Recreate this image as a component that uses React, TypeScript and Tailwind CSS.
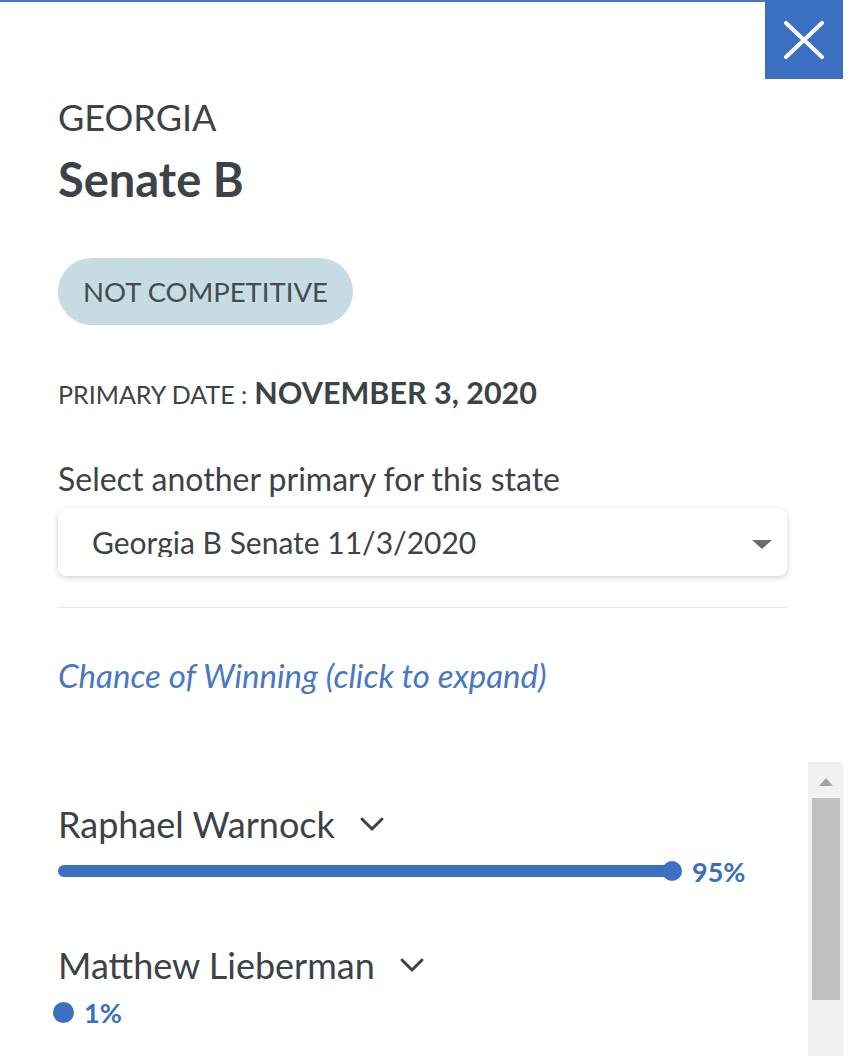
import { useState } from "react";

type Candidate = { name: string; chance: number };

const CANDIDATES: Candidate[] = [
  { name: "Raphael Warnock", chance: 95 },
  { name: "Matthew Lieberman", chance: 1 },
];

const FONT = { fontFamily: "Lato, 'Noto Sans', sans-serif" };

function Chevron() {
  return (
    <svg width="26" height="16" viewBox="0 0 26 16" className="shrink-0">
      <polyline
        points="3,3 13,13 23,3"
        fill="none"
        stroke="#3d4246"
        strokeWidth="3"
        strokeLinecap="round"
        strokeLinejoin="round"
      />
    </svg>
  );
}

function CandidateRow({ c }: { c: Candidate }) {
  // full track would be 655px; the knob sits on the bar's right end
  const width = Math.round((c.chance / 100) * 655);
  return (
    <div className="flex flex-col">
      <button className="flex items-center gap-[24px] text-left text-[36px] leading-none text-[#3d4246]">
        <span>{c.name}</span>
        <Chevron />
      </button>
      <div className="mt-[16px] flex items-center gap-[10px]">
        {c.chance > 5 ? (
          <div className="relative mr-[2px] h-[12px]" style={{ width }}>
            <div className="h-full rounded-full bg-[#3a6fc1]" />
            <span className="absolute right-[-2px] top-1/2 h-[20px] w-[20px] -translate-y-1/2 rounded-full bg-[#3a6fc1]" />
          </div>
        ) : (
          <span className="ml-[-5px] h-[21px] w-[21px] rounded-full bg-[#3a6fc1]" />
        )}
        <span className="text-[27px] font-bold leading-none text-[#3a6fc1]">
          {c.chance}%
        </span>
      </div>
    </div>
  );
}

export default function App() {
  const [primary, setPrimary] = useState("Georgia B Senate 11/3/2020");

  return (
    <div className="relative h-[1056px] w-[854px] overflow-hidden bg-white" style={FONT}>
      <div className="h-[2px] w-[765px] bg-[#4a78c0]" />

      <button
        aria-label="Close"
        className="absolute right-[11px] top-0 flex h-[79px] w-[78px] items-center justify-center bg-[#3a6fc1]"
      >
        <svg width="40" height="38" viewBox="0 0 40 38">
          <path d="M2 2 L38 36 M38 2 L2 36" stroke="white" strokeWidth="4" strokeLinecap="round" />
        </svg>
      </button>

      <div className="flex w-[843px] flex-col pl-[58px] pr-[56px]">
        <p className="mt-[97px] text-[36px] leading-none text-[#3d4246]">GEORGIA</p>
        <h1 className="mt-[21px] text-[47px] font-bold leading-none text-[#3d4246]">Senate B</h1>

        <span className="mt-[55px] flex h-[67px] w-[295px] items-center justify-center rounded-full bg-[#c6dbe2] text-[27.5px] leading-none text-[#454b50]">
          NOT COMPETITIVE
        </span>

        <p className="mt-[52px] flex items-baseline gap-[7px] leading-none text-[#3d4246]">
          <span className="text-[25px]">PRIMARY DATE :</span>
          <span className="text-[30.5px] font-bold">NOVEMBER 3, 2020</span>
        </p>

        <label className="mt-[55px] text-[32px] leading-none text-[#3d4246]">
          Select another primary for this state
        </label>
        <div className="relative mt-[13px] h-[68px] rounded-[8px] bg-white shadow-[0_2px_6px_rgba(0,0,0,0.18)]">
          <select
            value={primary}
            onChange={(e) => setPrimary(e.target.value)}
            className="h-full w-full appearance-none bg-transparent pl-[34px] text-[30px] leading-none text-[#3d4246] outline-none"
            style={FONT}
          >
            <option>Georgia B Senate 11/3/2020</option>
            <option>Georgia Senate 11/3/2020</option>
          </select>
          <svg
            width="20"
            height="9"
            viewBox="0 0 20 9"
            className="pointer-events-none absolute right-[15px] top-[32px]"
          >
            <polygon points="0,0 20,0 10,9" fill="#6b6b6b" />
          </svg>
        </div>

        <hr className="mt-[31px] border-t border-[#e6e6e6]" />

        <button className="mt-[51px] self-start text-[33px] italic leading-none text-[#4a78c0]">
          Chance of Winning (click to expand)
        </button>
      </div>

      <div className="mt-[70px] flex w-[843px] pl-[58px]">
        <div className="flex flex-1 flex-col gap-[62px] pt-[44px]">
          {CANDIDATES.map((c) => (
            <CandidateRow key={c.name} c={c} />
          ))}
        </div>
        <div className="flex h-[300px] w-[35px] flex-col items-center bg-[#f1f1f1]">
          <svg width="14" height="8" viewBox="0 0 14 8" className="mt-[16px]">
            <polygon points="7,0 14,8 0,8" fill="#a3a3a3" />
          </svg>
          <div className="mt-[12px] h-[202px] w-[28px] bg-[#c1c1c1]" />
        </div>
      </div>
    </div>
  );
}
